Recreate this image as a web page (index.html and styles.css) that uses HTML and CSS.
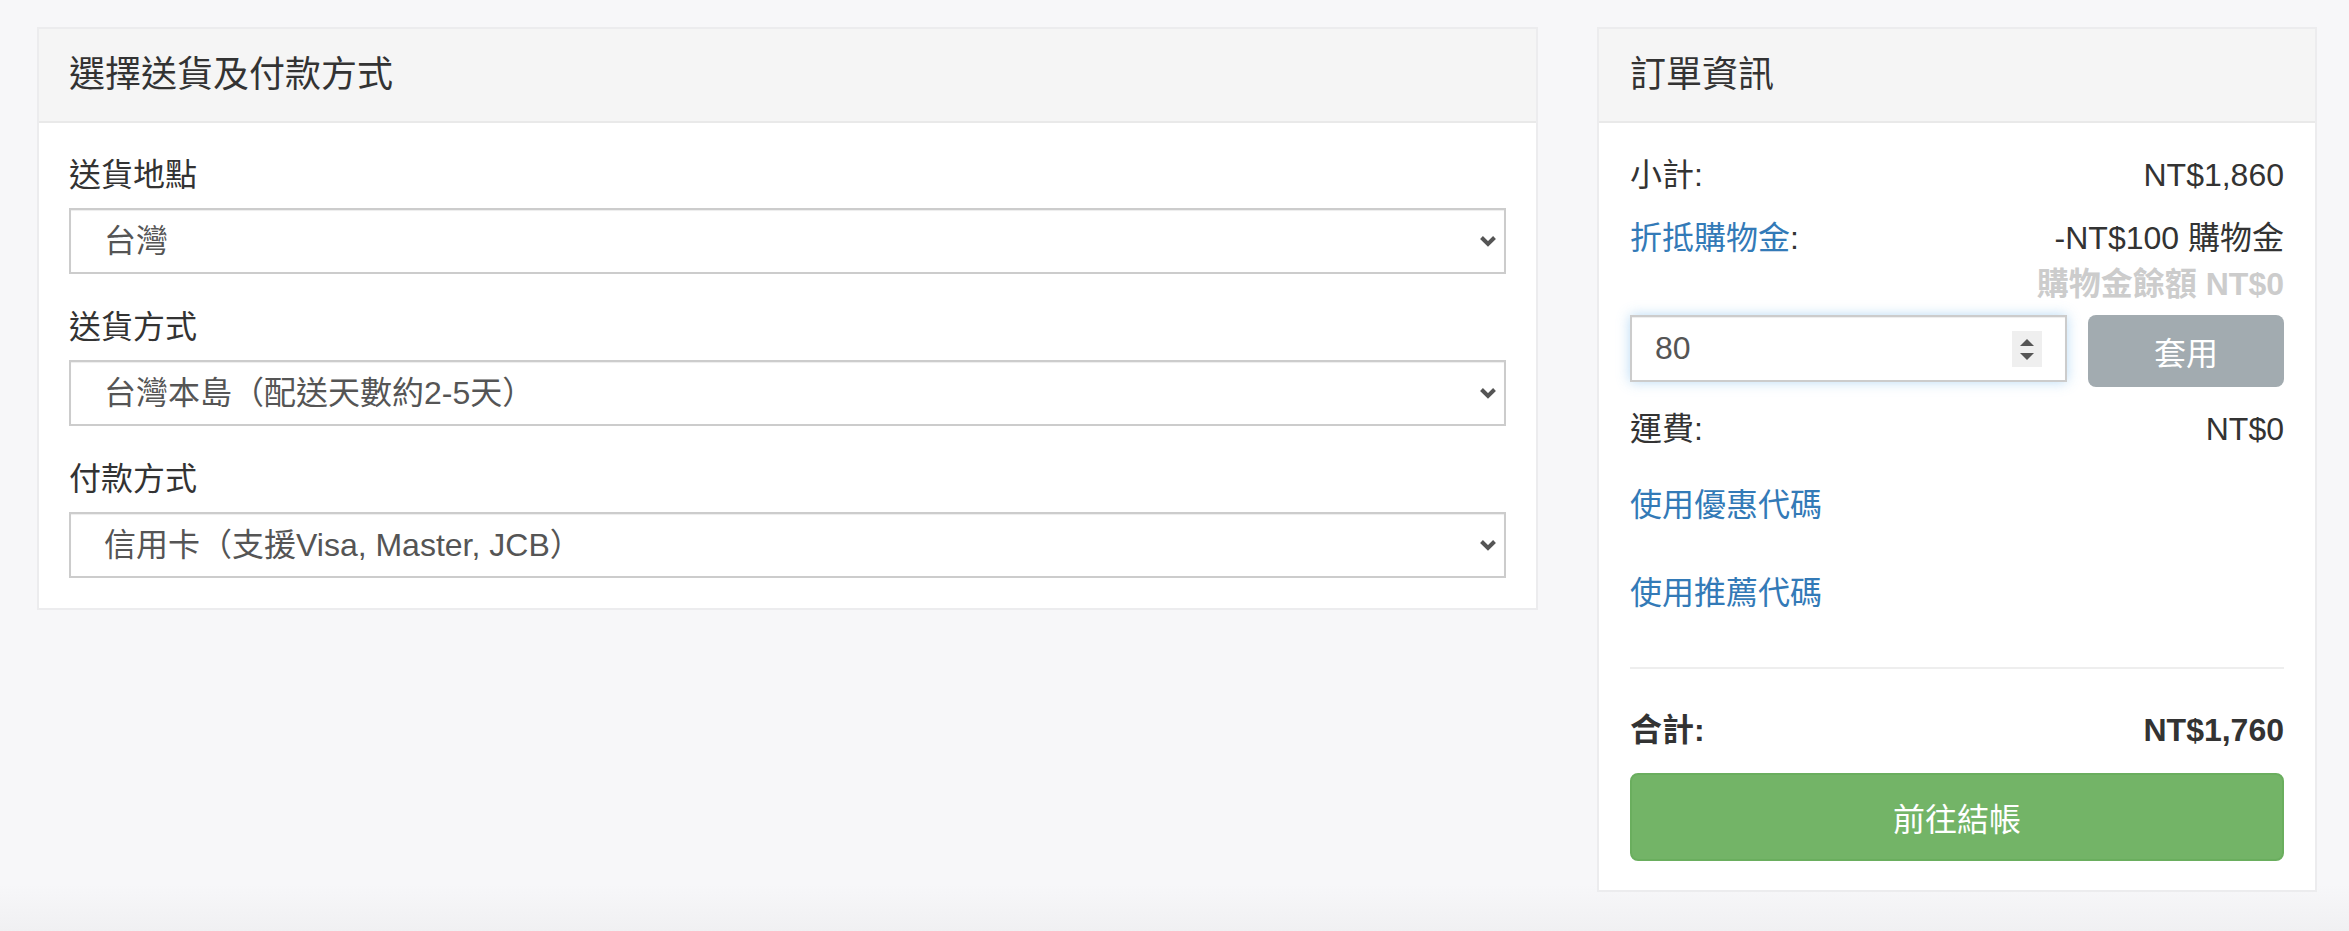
FILE: index.html
```html
<!DOCTYPE html>
<html lang="zh-Hant">
<head>
<meta charset="utf-8">
<title>結帳</title>
<link rel="stylesheet" href="styles.css">
</head>
<body>
<div class="page">
  <section class="panel panel-main">
    <header class="panel-heading"><h2 class="panel-title">選擇送貨及付款方式</h2></header>
    <div class="panel-body">
      <div class="form-group">
        <label class="form-label">送貨地點</label>
        <div class="select-wrap">
          <select class="form-select"><option>台灣</option></select>
          <svg class="chevron" viewBox="0 0 18 12" aria-hidden="true"><path d="M2.5 2.5 L9 9 L15.5 2.5"/></svg>
        </div>
      </div>
      <div class="form-group">
        <label class="form-label">送貨方式</label>
        <div class="select-wrap">
          <select class="form-select"><option>台灣本島（配送天數約2-5天）</option></select>
          <svg class="chevron" viewBox="0 0 18 12" aria-hidden="true"><path d="M2.5 2.5 L9 9 L15.5 2.5"/></svg>
        </div>
      </div>
      <div class="form-group">
        <label class="form-label">付款方式</label>
        <div class="select-wrap">
          <select class="form-select"><option>信用卡（支援Visa, Master, JCB）</option></select>
          <svg class="chevron" viewBox="0 0 18 12" aria-hidden="true"><path d="M2.5 2.5 L9 9 L15.5 2.5"/></svg>
        </div>
      </div>
    </div>
  </section>

  <aside class="panel panel-side">
    <header class="panel-heading"><h2 class="panel-title">訂單資訊</h2></header>
    <div class="panel-body side-body">
      <div class="row">
        <span>小計:</span>
        <span>NT$1,860</span>
      </div>
      <div class="row row-credit">
        <span><a class="link" href="#">折抵購物金</a>:</span>
        <span class="credit-values">
          <span class="credit-used">-NT$100 購物金</span>
          <span class="credit-left">購物金餘額 NT$0</span>
        </span>
      </div>
      <div class="credit-form">
        <div class="input-wrap">
          <input class="credit-input" type="text" value="80">
          <span class="spinner" aria-hidden="true"><span class="tri-up"></span><span class="tri-down"></span></span>
        </div>
        <button class="btn-apply" type="button">套用</button>
      </div>
      <div class="row row-ship">
        <span>運費:</span>
        <span>NT$0</span>
      </div>
      <div class="row row-coupon"><a class="link" href="#">使用優惠代碼</a></div>
      <div class="row row-referral"><a class="link" href="#">使用推薦代碼</a></div>
      <hr class="divider">
      <div class="row row-total">
        <span>合計:</span>
        <span>NT$1,760</span>
      </div>
      <button class="btn-checkout" type="button">前往結帳</button>
    </div>
  </aside>
</div>
</body>
</html>
```

FILE: styles.css
```css
html {
  height: 931px;
}
body {
  margin: 0;
  min-height: 931px;
  background: linear-gradient(to bottom, #f7f7f9 0, #f7f7f9 885px, #f0f0f2 931px);
  font-family: "Liberation Sans", "Noto Sans CJK TC", sans-serif;
  color: #333333;
  font-size: 32px;
  line-height: 46px;
}

.page {
  display: flex;
  align-items: flex-start;
  gap: 59px;
  padding: 27px 0 0 37px;
}

.panel {
  background: #ffffff;
  border: 2px solid #ececee;
  box-sizing: border-box;
}
.panel-main {
  width: 1501px;
}
.panel-side {
  width: 720px;
}

.panel-heading {
  height: 92px;
  background: #f5f5f5;
  border-bottom: 2px solid #e9e9e9;
  display: flex;
  align-items: center;
  padding: 0 30px;
}
.panel-title {
  margin: 0;
  font-size: 36px;
  font-weight: normal;
  line-height: 46px;
  color: #333333;
}
.panel-side .panel-heading {
  padding: 0 31px;
}

.panel-body {
  padding: 29px 30px 30px;
}

.form-group + .form-group {
  margin-top: 30px;
}
.form-label {
  display: block;
  font-size: 32px;
  line-height: 46px;
  margin-bottom: 10px;
  color: #333333;
}
.select-wrap {
  position: relative;
}
.form-select {
  display: block;
  width: 100%;
  height: 66px;
  box-sizing: border-box;
  -webkit-appearance: none;
  appearance: none;
  border: 2px solid #cccccc;
  border-radius: 0;
  background: #ffffff;
  box-shadow: inset 0 1px 1px rgba(0, 0, 0, 0.075);
  padding: 0 40px 0 33px;
  font-family: "Liberation Sans", "Noto Sans CJK TC", sans-serif;
  font-size: 32px;
  color: #555555;
  outline: none;
}
.chevron {
  position: absolute;
  right: 9px;
  top: 27px;
  width: 18px;
  height: 12px;
  fill: none;
  stroke: #555555;
  stroke-width: 4;
  pointer-events: none;
}

.side-body {
  padding: 29px 31px 29px;
}
.row {
  display: flex;
  justify-content: space-between;
  line-height: 46px;
}
.link {
  color: #337ab7;
  text-decoration: none;
}
.row-credit {
  margin-top: 17px;
}
.credit-values {
  display: flex;
  flex-direction: column;
  align-items: flex-end;
}
.credit-left {
  color: #cccccc;
  font-weight: bold;
}

.credit-form {
  display: flex;
  align-items: flex-start;
  gap: 21px;
  margin-top: 8px;
}
.input-wrap {
  position: relative;
  flex: 1;
}
.credit-input {
  display: block;
  width: 100%;
  height: 67px;
  box-sizing: border-box;
  border: 2px solid #cccccc;
  border-radius: 0;
  padding: 0 60px 0 23px;
  font-family: "Liberation Sans", "Noto Sans CJK TC", sans-serif;
  font-size: 32px;
  color: #555555;
  background: #ffffff;
  box-shadow: inset 0 1px 1px rgba(0, 0, 0, 0.075), 0 0 12px rgba(102, 175, 233, 0.45);
  outline: none;
}
.spinner {
  position: absolute;
  right: 25px;
  top: 16px;
  width: 30px;
  height: 36px;
  background: #efefef;
  display: flex;
  flex-direction: column;
  align-items: center;
  justify-content: center;
  gap: 7px;
}
.tri-up {
  width: 0;
  height: 0;
  border-left: 7px solid transparent;
  border-right: 7px solid transparent;
  border-bottom: 7px solid #555555;
}
.tri-down {
  width: 0;
  height: 0;
  border-left: 7px solid transparent;
  border-right: 7px solid transparent;
  border-top: 7px solid #555555;
}
.btn-apply {
  width: 196px;
  height: 72px;
  border: none;
  border-radius: 8px;
  background: #a2abb0;
  color: #ffffff;
  font-family: "Liberation Sans", "Noto Sans CJK TC", sans-serif;
  font-size: 32px;
  padding: 0;
}

.row-ship {
  margin-top: 19px;
}
.row-coupon {
  margin-top: 30px;
}
.row-referral {
  margin-top: 42px;
}
.divider {
  margin: 51px 0 0;
  border: none;
  border-top: 2px solid #eeeeee;
  height: 0;
}
.row-total {
  margin-top: 38px;
  font-weight: bold;
}
.btn-checkout {
  display: block;
  width: 100%;
  height: 88px;
  margin-top: 20px;
  border: 2px solid #6aae5e;
  border-radius: 8px;
  background: #73b467;
  color: #ffffff;
  font-family: "Liberation Sans", "Noto Sans CJK TC", sans-serif;
  font-size: 32px;
  padding: 0;
}
```
